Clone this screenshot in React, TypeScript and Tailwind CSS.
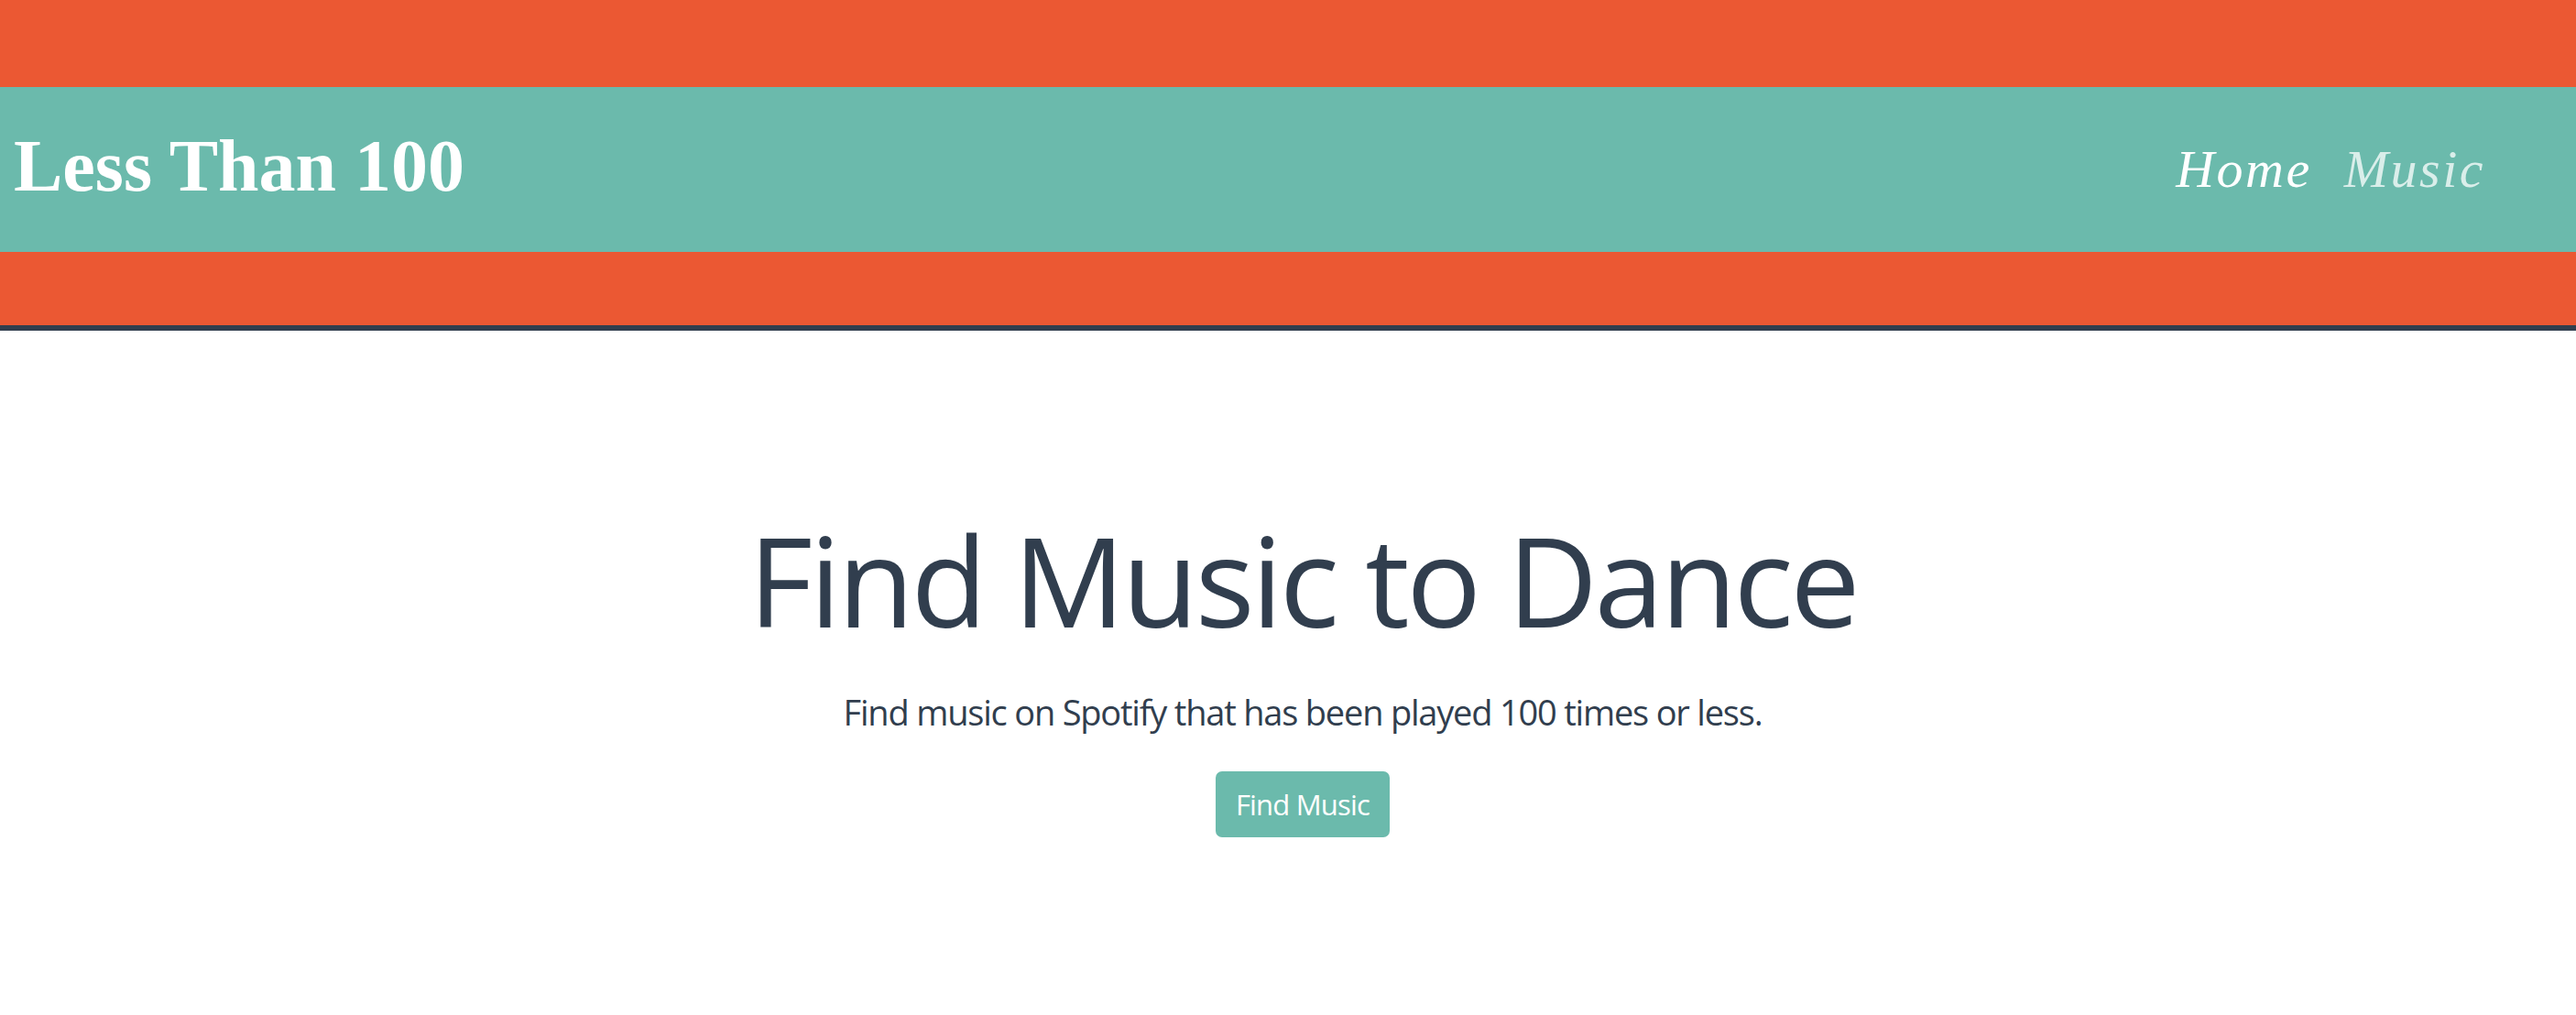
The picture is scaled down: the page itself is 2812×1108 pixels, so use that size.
import React from 'react';

const serif = { fontFamily: '"Liberation Serif", "Times New Roman", serif' };
const sans = { fontFamily: '"Open Sans", "Noto Sans", sans-serif' };

export default function App() {
  return (
    <div className="min-h-[1108px] bg-white">
      <header className="bg-[#eb5833] pt-[95px] pb-[80px] border-b-[6px] border-[#313e4e]">
        <nav className="h-[180px] bg-[#6bbaac] flex items-center justify-between pl-[15px] pr-[99px]" style={serif}>
          <h1 className="text-[80px] font-bold text-white leading-none pb-[8px]">Less Than 100</h1>
          <ul className="flex items-center gap-[35px] italic text-[58px] tracking-[2.5px] leading-none">
            <li className="text-white">Home</li>
            <li className="text-white/75">Music</li>
          </ul>
        </nav>
      </header>
      <main className="flex flex-col items-center pt-[204px] pl-[32px] text-[#313e4e]" style={sans}>
        <h2 className="text-[136px] leading-none tracking-[-3.5px]">Find Music to Dance</h2>
        <p className="mt-[57px] text-[38px] leading-none tracking-[-1.2px]">
          Find music on Spotify that has been played 100 times or less.
        </p>
        <button className="mt-[46px] h-[72px] px-[22px] rounded-[7px] bg-[#6bbaac] text-white text-[31px] leading-none tracking-[-0.8px]">
          Find Music
        </button>
      </main>
    </div>
  );
}
